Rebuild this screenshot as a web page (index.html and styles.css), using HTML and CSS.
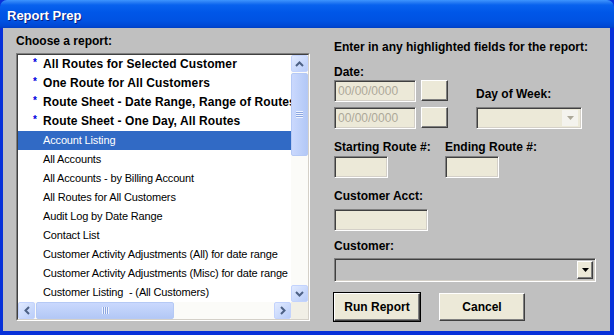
FILE: index.html
```html
<!DOCTYPE html>
<html lang="en">
<head>
    <meta charset="UTF-8">
    <title>Report Prep</title>
    <link rel="stylesheet" href="styles.css">
</head>
<body>

<div class="window">
    <!-- Barra de título -->
    <div class="titlebar">
        <span class="title">Report Prep</span>
    </div>

    <div class="client">
        <!-- Lista de relatórios -->
        <section class="reports">
            <div class="label">Choose a report:</div>
            <div class="listbox-frame">
                <div class="listbox">
                    <ul class="report-list">
                        <li class="star"><span class="mark">*</span>All Routes for Selected Customer</li>
                        <li class="star"><span class="mark">*</span>One Route for All Customers</li>
                        <li class="star"><span class="mark">*</span>Route Sheet - Date Range, Range of Routes</li>
                        <li class="star"><span class="mark">*</span>Route Sheet - One Day, All Routes</li>
                        <li class="selected"><span class="mark"></span>Account Listing</li>
                        <li><span class="mark"></span>All Accounts</li>
                        <li><span class="mark"></span>All Accounts - by Billing Account</li>
                        <li><span class="mark"></span>All Routes for All Customers</li>
                        <li><span class="mark"></span>Audit Log by Date Range</li>
                        <li><span class="mark"></span>Contact List</li>
                        <li><span class="mark"></span>Customer Activity Adjustments (All) for date range</li>
                        <li><span class="mark"></span>Customer Activity Adjustments (Misc) for date range</li>
                        <li><span class="mark"></span>Customer Listing &nbsp;- (All Customers)</li>
                    </ul>

                    <div class="vscroll">
                        <div class="sb-btn">
                            <svg width="9" height="6" viewBox="0 0 9 6"><polyline points="1,5 4.5,1.5 8,5" fill="none" stroke="#4d6185" stroke-width="2"/></svg>
                        </div>
                        <div class="v-track">
                            <div class="v-thumb">
                                <span class="grip-v"></span>
                            </div>
                        </div>
                        <div class="sb-btn">
                            <svg width="9" height="6" viewBox="0 0 9 6"><polyline points="1,1 4.5,4.5 8,1" fill="none" stroke="#4d6185" stroke-width="2"/></svg>
                        </div>
                    </div>

                    <div class="hscroll">
                        <div class="sb-btn">
                            <svg width="6" height="9" viewBox="0 0 6 9"><polyline points="5,1 1.5,4.5 5,8" fill="none" stroke="#4d6185" stroke-width="2"/></svg>
                        </div>
                        <div class="h-track">
                            <div class="h-thumb">
                                <span class="grip-h"></span>
                            </div>
                        </div>
                        <div class="sb-btn">
                            <svg width="6" height="9" viewBox="0 0 6 9"><polyline points="1,1 4.5,4.5 1,8" fill="none" stroke="#4d6185" stroke-width="2"/></svg>
                        </div>
                    </div>

                    <div class="corner"></div>
                </div>
            </div>
        </section>

        <!-- Parâmetros -->
        <section class="params">
            <div class="heading">Enter in any highlighted fields for the report:</div>

            <div class="date-block">
                <div class="date-col">
                    <div class="label">Date:</div>
                    <div class="date-row">
                        <div class="field date-field">00/00/0000</div>
                        <div class="btn small-btn"></div>
                    </div>
                    <div class="date-row">
                        <div class="field date-field">00/00/0000</div>
                        <div class="btn small-btn"></div>
                    </div>
                </div>
                <div class="dow-col">
                    <div class="label">Day of Week:</div>
                    <div class="field dow-combo">
                        <div class="combo-btn disabled">
                            <svg width="7" height="4" viewBox="0 0 7 4"><polygon points="0,0 7,0 3.5,4" fill="#aca899"/></svg>
                        </div>
                    </div>
                </div>
            </div>

            <div class="route-block">
                <div class="route-col">
                    <div class="label">Starting Route #:</div>
                    <div class="field route-field"></div>
                </div>
                <div class="route-col">
                    <div class="label">Ending Route #:</div>
                    <div class="field route-field"></div>
                </div>
            </div>

            <div class="label acct-label">Customer Acct:</div>
            <div class="field acct-field"></div>

            <div class="label cust-label">Customer:</div>
            <div class="field cust-combo">
                <div class="combo-btn">
                    <svg width="7" height="4" viewBox="0 0 7 4"><polygon points="0,0 7,0 3.5,4" fill="#000"/></svg>
                </div>
            </div>

            <div class="actions">
                <button class="btn default">Run Report</button>
                <button class="btn">Cancel</button>
            </div>
        </section>
    </div>
</div>

</body>
</html>
```

FILE: styles.css
```css
/* Reset */
* {
    margin: 0;
    padding: 0;
    box-sizing: border-box;
}

:root {
    --frame: #0831d9;
    --face: #c0c0c0;
    --beige: #ece9d8;
    --disabled: #aca899;
    --highlight: #316ac5;
}

body {
    font-family: "Liberation Sans", Arial, sans-serif;
    background: var(--frame);
    width: 614px;
    height: 335px;
    overflow: hidden;
}

/* Janela */
.window {
    width: 614px;
    height: 335px;
    display: flex;
    flex-direction: column;
    background: var(--frame);
    border-top-right-radius: 7px;
    border-top-left-radius: 7px;
    overflow: hidden;
}

.titlebar {
    height: 28px;
    flex: none;
    background: linear-gradient(#3d95ff 0, #2a7ff5 2px, #0862ee 5px, #0057e8 12px, #0052e2 21px, #0048d4 26px, #0040c4 28px);
    display: flex;
    align-items: center;
    padding-left: 7px;
}

.title {
    color: #fff;
    font-weight: bold;
    font-size: 13px;
    text-shadow: 1px 1px 0 #0a1e80;
    margin-top: 2px;
}

.client {
    flex: 1;
    margin: 0 4px 4px 3px;
    background: var(--face);
    display: flex;
    color: #000;
}

.label,
.heading {
    font-size: 12px;
    font-weight: bold;
    line-height: 14px;
}

/* Lista */
.reports {
    width: 307px;
    padding: 6px 0 0 13px;
    flex: none;
}

.reports > .label {
    margin-bottom: 5px;
}

.listbox-frame {
    width: 294px;
    height: 268px;
    border: 1px solid;
    border-color: #808080 #fff #fff #808080;
}

.listbox {
    height: 100%;
    border: 1px solid;
    border-color: #404040 #d4d0c8 #d4d0c8 #404040;
    display: grid;
    grid-template-columns: 1fr 17px;
    grid-template-rows: 1fr 17px;
    background: #fff;
}

.report-list {
    list-style: none;
    overflow: hidden;
    font-size: 11px;
    letter-spacing: -0.15px;
}

.report-list li {
    height: 19px;
    line-height: 19px;
    white-space: nowrap;
    display: flex;
    align-items: center;
}

.report-list li.star {
    font-weight: bold;
    font-size: 12px;
    letter-spacing: 0.1px;
}

.report-list li.selected {
    background: var(--highlight);
    color: #fff;
}

.mark {
    width: 25px;
    flex: none;
    text-align: right;
    padding-right: 6px;
    color: #0000e0;
    font-size: 10px;
    position: relative;
    top: -2px;
}

/* Barras de rolagem */
.vscroll,
.hscroll {
    background: #fbfbf8;
    display: flex;
}

.vscroll {
    flex-direction: column;
}

.sb-btn {
    width: 17px;
    height: 17px;
    flex: none;
    border: 1px solid #c3d3fd;
    border-radius: 2px;
    background: linear-gradient(135deg, #e1eaff, #b9cdf9);
    display: flex;
    align-items: center;
    justify-content: center;
}

.v-track,
.h-track {
    flex: 1;
    display: flex;
}

.v-track {
    flex-direction: column;
    padding-top: 1px;
}

.v-thumb {
    height: 83px;
    border: 1px solid #b5c9f5;
    border-radius: 2px;
    background: linear-gradient(90deg, #cad8fd, #bccff9 60%, #b3c8f6);
    display: flex;
    align-items: center;
    justify-content: center;
}

.h-thumb {
    width: 138px;
    margin-left: 1px;
    border: 1px solid #b5c9f5;
    border-radius: 2px;
    background: linear-gradient(#cad8fd, #bccff9 60%, #b3c8f6);
    display: flex;
    align-items: center;
    justify-content: center;
}

.grip-v {
    width: 7px;
    height: 7px;
    background: repeating-linear-gradient(#eef3ff 0 1px, #8ca6e0 1px 2px);
}

.grip-h {
    width: 7px;
    height: 7px;
    background: repeating-linear-gradient(90deg, #eef3ff 0 1px, #8ca6e0 1px 2px);
}

.corner {
    background: #f1efe6;
}

/* Parâmetros */
.params {
    flex: 1;
    padding: 12px 0 0 24px;
}

.field {
    height: 22px;
    background: var(--beige);
    border: 1px solid;
    border-color: #808080 #fff #fff #808080;
    box-shadow: inset 1px 1px 0 #404040, inset -1px -1px 0 #d4d0c8;
    font-size: 12px;
    color: var(--disabled);
    padding: 3px 0 0 3px;
}

.btn {
    background: var(--beige);
    border: 1px solid;
    border-color: #fff #404040 #404040 #fff;
    box-shadow: inset -1px -1px 0 #808080;
    font-family: inherit;
}

.date-block {
    display: flex;
    margin-top: 11px;
}

.date-col {
    display: flex;
    flex-direction: column;
    gap: 1px;
}

.date-row {
    display: flex;
    gap: 5px;
    margin-bottom: 4px;
}

.date-field {
    width: 82px;
}

.small-btn {
    width: 27px;
    height: 21px;
}

.dow-col {
    margin-left: 28px;
    display: flex;
    flex-direction: column;
    justify-content: flex-end;
    padding-bottom: 4px;
}

.dow-col .label {
    margin-bottom: 6px;
}

.dow-combo,
.cust-combo {
    display: flex;
    justify-content: flex-end;
    align-items: center;
    padding: 2px;
}

.dow-combo {
    width: 106px;
}

.combo-btn {
    width: 16px;
    height: 18px;
    background: var(--beige);
    border: 1px solid;
    border-color: #fff #404040 #404040 #fff;
    box-shadow: inset -1px -1px 0 #808080;
    display: flex;
    align-items: center;
    justify-content: center;
}

.combo-btn.disabled {
    border-color: #f4f3ee;
    box-shadow: none;
    background: #f4f3ee;
    height: 16px;
    margin-right: 1px;
}

.route-block {
    display: flex;
    margin-top: 7px;
}

.route-col {
    width: 111px;
}

.route-col .label {
    margin-bottom: 2px;
}

.route-field {
    width: 54px;
}

.acct-label {
    margin-top: 11px;
    margin-bottom: 6px;
}

.acct-field {
    width: 94px;
}

.cust-label {
    margin-top: 8px;
    margin-bottom: 5px;
}

.cust-combo {
    width: 262px;
    height: 24px;
    background: var(--face);
}

.actions {
    display: flex;
    gap: 19px;
    margin-top: 11px;
}

.actions .btn {
    width: 86px;
    height: 28px;
    font-size: 12px;
    font-weight: bold;
    color: #000;
}

.actions .btn.default {
    outline: 1px solid #000;
    outline-offset: 0;
}
```
